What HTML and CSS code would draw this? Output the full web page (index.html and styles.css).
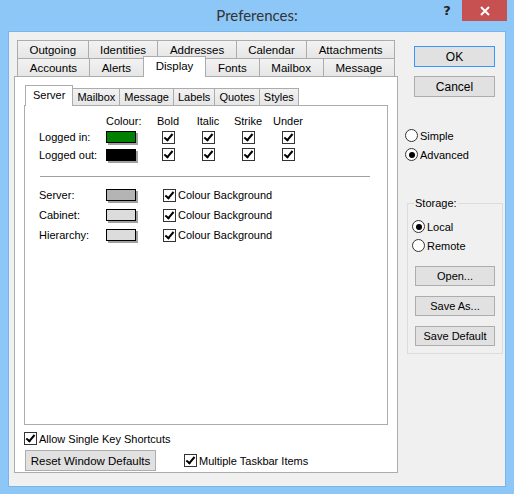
FILE: index.html
```html
<!DOCTYPE html>
<html lang="en">
<head>
  <meta charset="UTF-8" />
  <title>Preferences</title>
  <link rel="stylesheet" href="styles.css">
</head>
<body>
  <div class="window">
    <div class="titlebar">
      <span></span>
      <span class="title">Preferences:</span>
      <div class="caption-btns">
        <span class="help">?</span>
        <span class="close">
          <svg width="10" height="10" viewBox="0 0 10 10"><path d="M1 1L9 9M9 1L1 9" stroke="#fff" stroke-width="2"/></svg>
        </span>
      </div>
    </div>

    <div class="client">
      <div class="tabctl">
        <div class="tabrow">
          <span class="tab">Outgoing</span>
          <span class="tab">Identities</span>
          <span class="tab">Addresses</span>
          <span class="tab">Calendar</span>
          <span class="tab">Attachments</span>
        </div>
        <div class="tabrow">
          <span class="tab">Accounts</span>
          <span class="tab">Alerts</span>
          <span class="tab active">Display</span>
          <span class="tab">Fonts</span>
          <span class="tab">Mailbox</span>
          <span class="tab">Message</span>
        </div>

        <div class="panel">
          <div class="subtabs">
            <span class="subtab active">Server</span>
            <span class="subtab">Mailbox</span>
            <span class="subtab">Message</span>
            <span class="subtab">Labels</span>
            <span class="subtab">Quotes</span>
            <span class="subtab">Styles</span>
          </div>

          <div class="subpanel">
            <div class="colour-grid">
              <span></span>
              <span>Colour:</span>
              <span class="col-head">Bold</span>
              <span class="col-head">Italic</span>
              <span class="col-head">Strike</span>
              <span class="col-head">Under</span>

              <span>Logged in:</span>
              <span class="swatch green"></span>
              <span class="cb"></span>
              <span class="cb"></span>
              <span class="cb"></span>
              <span class="cb"></span>

              <span>Logged out:</span>
              <span class="swatch black"></span>
              <span class="cb"></span>
              <span class="cb"></span>
              <span class="cb"></span>
              <span class="cb"></span>
            </div>

            <div class="sep"></div>

            <div class="bg-grid">
              <span>Server:</span>
              <span class="swatch grey"></span>
              <label class="check"><span class="cb"></span>Colour Background</label>

              <span>Cabinet:</span>
              <span class="swatch light"></span>
              <label class="check"><span class="cb"></span>Colour Background</label>

              <span>Hierarchy:</span>
              <span class="swatch light"></span>
              <label class="check"><span class="cb"></span>Colour Background</label>
            </div>
          </div>

          <label class="check allow"><span class="cb"></span>Allow Single Key Shortcuts</label>

          <div class="bottom-row">
            <button class="btn reset">Reset Window Defaults</button>
            <label class="check"><span class="cb"></span>Multiple Taskbar Items</label>
          </div>
        </div>
      </div>

      <div class="side">
        <button class="btn default">OK</button>
        <button class="btn cancel">Cancel</button>

        <label class="radio simple"><span class="rb"></span>Simple</label>
        <label class="radio"><span class="rb on"></span>Advanced</label>

        <fieldset class="storage">
          <legend>Storage:</legend>
          <label class="radio"><span class="rb on"></span>Local</label>
          <label class="radio"><span class="rb"></span>Remote</label>
          <button class="btn small first">Open...</button>
          <button class="btn small">Save As...</button>
          <button class="btn small">Save Default</button>
        </fieldset>
      </div>
    </div>
  </div>
</body>
</html>
```

FILE: styles.css
```css
body {
  margin: 0;
  background: #8cc7f7;
  font-family: "Liberation Sans", Arial, sans-serif;
  font-size: 11px;
  color: #000;
}

.window {
  width: 514px;
  height: 494px;
}

/* title bar */
.titlebar {
  height: 31px;
  display: grid;
  grid-template-columns: 1fr auto 1fr;
}

.title {
  font-family: Lato, "Noto Sans", sans-serif;
  font-size: 15px;
  color: #333;
  line-height: 31px;
}

.caption-btns {
  justify-self: end;
  display: flex;
  align-items: flex-start;
  margin-right: 7px;
}

.help {
  font-family: "DejaVu Sans", sans-serif;
  font-weight: bold;
  font-size: 13px;
  color: #222;
  width: 26px;
  line-height: 21px;
  text-align: center;
  margin-right: 2px;
}

.close {
  width: 45px;
  height: 21px;
  background: #c75050;
  display: flex;
  align-items: center;
  justify-content: center;
}

/* client area */
.client {
  margin: 0 8px;
  height: 456px;
  box-sizing: border-box;
  background: #f0f0f0;
  border: 1px solid #79b4ea;
  display: flex;
  padding: 8px 0 0 5px;
}

.tabctl {
  width: 384px;
}

.tabrow {
  display: flex;
  width: 378px;
  margin-left: 3px;
  height: 18px;
}

.tab {
  flex: 1 1 auto;
  box-sizing: border-box;
  height: 18px;
  padding: 0 6px;
  border: 1px solid #acacac;
  border-bottom: none;
  margin-left: -1px;
  background: linear-gradient(#f2f2f2, #e6e6e6);
  text-align: center;
  font-size: 11.5px;
  line-height: 18px;
  white-space: nowrap;
}

.tab:first-child {
  margin-left: 0;
}

.tab.active {
  position: relative;
  z-index: 1;
  background: #fff;
  height: 21px;
  margin-top: -2px;
  margin-bottom: -1px;
  line-height: 18px;
}

.panel {
  background: #fff;
  border: 1px solid #acacac;
  padding: 11px 9px 1px 9px;
}

.subtabs {
  display: flex;
  height: 17px;
  margin-left: 1px;
}

.subtab {
  box-sizing: border-box;
  height: 17px;
  padding: 0 4px;
  border: 1px solid #acacac;
  border-bottom: none;
  margin-left: -1px;
  background: linear-gradient(#f2f2f2, #e6e6e6);
  line-height: 16px;
  white-space: nowrap;
}

.subtab.active {
  position: relative;
  z-index: 1;
  background: #fff;
  height: 21px;
  margin: -3px 0 -1px 0;
  padding: 0 7px;
  line-height: 18px;
}

.subpanel {
  height: 320px;
  box-sizing: border-box;
  border: 1px solid #acacac;
}

.colour-grid {
  display: grid;
  grid-template-columns: 67px 42px repeat(4, 40px);
  grid-template-rows: 14px 18px 17px;
  align-items: center;
  padding: 8px 0 0 14px;
}

.col-head {
  justify-self: center;
}

.colour-grid .cb {
  justify-self: center;
}

.sep {
  border-top: 1px solid #a0a0a0;
  margin: 13px 17px 0 15px;
}

.bg-grid {
  display: grid;
  grid-template-columns: 67px 57px auto;
  grid-auto-rows: 20px;
  align-items: center;
  padding-left: 14px;
  margin-top: 8px;
}

.swatch {
  display: block;
  width: 28px;
  height: 10px;
  border: 1px solid #000;
  box-shadow: 2px 2px 0 #a0a0a0;
}

.green { background: #008000; }
.black { background: #000; }
.grey { background: #b4b4b4; }
.light { background: #dcdcdc; }

/* checkbox */
.cb {
  width: 13px;
  height: 13px;
  box-sizing: border-box;
  border: 1px solid #333;
  background: #fff;
  display: flex;
  align-items: center;
  justify-content: center;
}

.cb::after {
  content: "";
  width: 3px;
  height: 7px;
  border: solid #000;
  border-width: 0 2px 2px 0;
  transform: rotate(40deg);
  margin-top: -2px;
}

.check {
  display: flex;
  align-items: center;
  gap: 2px;
  white-space: nowrap;
}

.allow {
  margin-top: 7px;
  height: 13px;
}

.bottom-row {
  display: flex;
  align-items: center;
  margin-top: 5px;
}

.bottom-row .check {
  margin-left: 28px;
}

/* buttons */
.btn {
  font-family: "Liberation Sans", Arial, sans-serif;
  font-size: 11px;
  color: #000;
  background: #e1e1e1;
  border: 1px solid #adadad;
  padding: 0;
  height: 21px;
  box-sizing: border-box;
}

.reset {
  width: 131px;
  margin-left: 1px;
  font-size: 11.5px;
}

.side {
  margin-left: 7px;
  width: 99px;
  padding-top: 6px;
  display: flex;
  flex-direction: column;
  align-items: flex-start;
}

.default,
.cancel {
  width: 81px;
  margin-left: 9px;
  font-size: 12px;
}

.default {
  border-color: #3399ff;
}

.cancel {
  margin-top: 9px;
}

/* radios */
.radio {
  display: flex;
  align-items: center;
  gap: 2px;
  height: 13px;
  margin-top: 6px;
}

.simple {
  margin-top: 32px;
}

.rb {
  width: 13px;
  height: 13px;
  box-sizing: border-box;
  border: 1px solid #333;
  border-radius: 50%;
  background: #fff;
  display: flex;
  align-items: center;
  justify-content: center;
}

.rb.on::after {
  content: "";
  width: 6px;
  height: 6px;
  border-radius: 50%;
  background: #000;
}

.storage {
  margin: 36px 0 0 2px;
  width: 96px;
  box-sizing: border-box;
  border: 1px solid #dcdcdc;
  padding: 10px 0 7px 4px;
  min-width: 0;
  display: flex;
  flex-direction: column;
  align-items: flex-start;
}

.storage legend {
  padding: 0 1px;
  margin-left: 2px;
  line-height: 13px;
}

.storage .radio:first-of-type {
  margin-top: 0;
}

.small {
  width: 80px;
  height: 20px;
  margin: 10px 0 0 3px;
}

.small.first {
  margin-top: 14px;
}
```
